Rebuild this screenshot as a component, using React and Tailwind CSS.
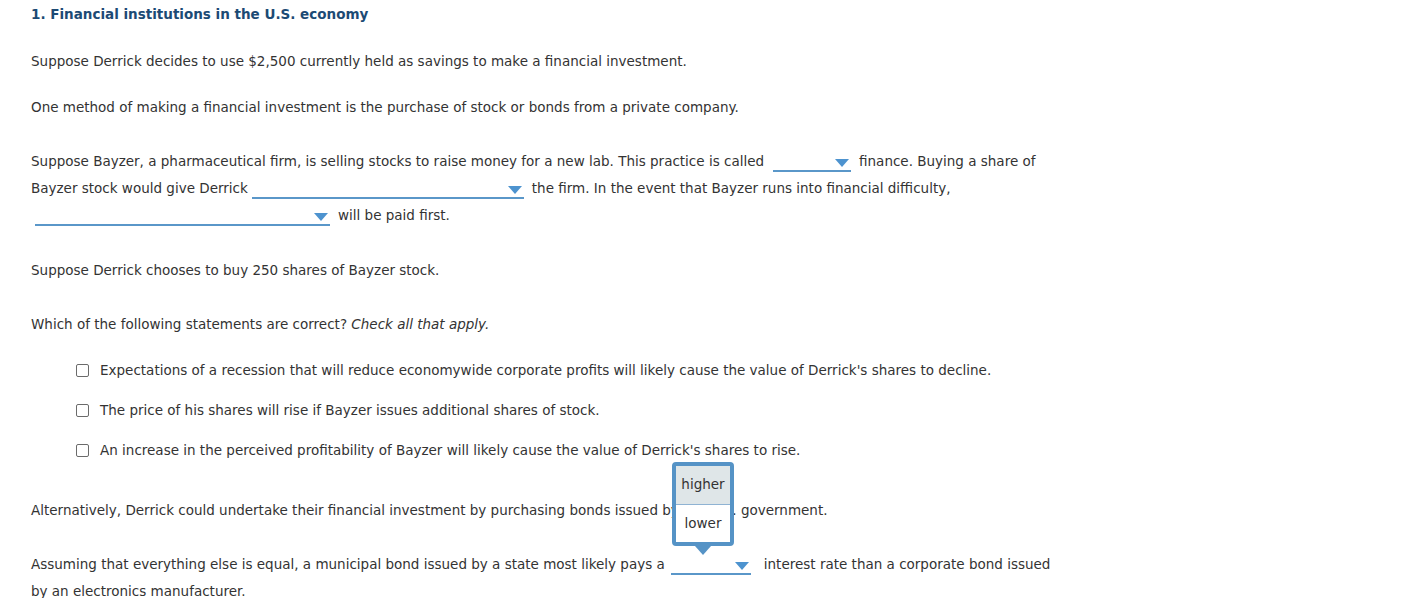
import React from "react";

function Drop({ w, cls = "" }) {
  return (
    <span
      className={`relative inline-block h-[18px] border-b-2 border-[#5a97c9] align-[-6px] ${cls}`}
      style={{ width: w }}
    >
      <span className="absolute right-[2px] top-[5px] h-0 w-0 border-l-[7px] border-r-[7px] border-t-[8px] border-l-transparent border-r-transparent border-t-[#4d93cf]" />
    </span>
  );
}

function Check({ children }) {
  return (
    <div className="flex items-center h-[27px]">
      <span className="ml-[45px] mr-[11px] inline-block h-[13px] w-[13px] rounded-[2px] border border-[#6b6b6b] bg-white" />
      <span>{children}</span>
    </div>
  );
}

export default function App() {
  return (
    <div
      className="w-[1406px] h-[598px] overflow-hidden bg-white text-[13.5px] leading-[27px] text-[#333333] pl-[31px]"
      style={{ fontFamily: '"DejaVu Sans", Verdana, sans-serif' }}
    >
      <div className="pt-[4px] h-[24px] leading-[20px] font-bold text-[#1c4a74]">
        1. Financial institutions in the U.S. economy
      </div>
      <p className="mt-[23.5px]">
        Suppose Derrick decides to use $2,500 currently held as savings to make a financial investment.
      </p>
      <p className="mt-[19px]">
        One method of making a financial investment is the purchase of stock or bonds from a private company.
      </p>
      <p className="mt-[27px] whitespace-nowrap">
        Suppose Bayzer, a pharmaceutical firm, is selling stocks to raise money for a new lab. This practice is called
        <Drop w={78} cls="ml-[9px] mr-[8px]" />
        finance. Buying a share of
        <br />
        Bayzer stock would give Derrick
        <Drop w={272} cls="ml-[4px] mr-[8px]" />
        the firm. In the event that Bayzer runs into financial difficulty,
        <br />
        <Drop w={295} cls="ml-[4px] mr-[8px]" />
        will be paid first.
      </p>
      <p className="mt-[28px]">Suppose Derrick chooses to buy 250 shares of Bayzer stock.</p>
      <p className="mt-[27px]">
        Which of the following statements are correct? <em>Check all that apply.</em>
      </p>
      <div className="mt-[19px] flex flex-col gap-[13px]">
        <Check>
          Expectations of a recession that will reduce economywide corporate profits will likely cause the value of Derrick's shares to decline.
        </Check>
        <Check>The price of his shares will rise if Bayzer issues additional shares of stock.</Check>
        <Check>
          An increase in the perceived profitability of Bayzer will likely cause the value of Derrick's shares to rise.
        </Check>
      </div>
      <div className="relative mt-[33px]">
        <p>
          Alternatively, Derrick could undertake their financial investment by purchasing bonds issued by the U.S. government.
        </p>
        <div className="absolute left-[641px] top-[-35px] z-10 text-[13.5px]">
          <div className="w-[62px] rounded-[4px] border-[4px] border-[#5593c6] bg-white">
            <div className="h-[39px] flex items-center justify-center bg-[#dfe6e8] border-b border-[#8fb3d3] leading-none">
              higher
            </div>
            <div className="h-[37px] pt-[1px] flex items-center justify-center leading-none">lower</div>
          </div>
          <div className="mx-auto h-0 w-0 border-l-[8px] border-r-[8px] border-t-[9px] border-l-transparent border-r-transparent border-t-[#5593c6]" />
        </div>
        <p className="mt-[27px] whitespace-nowrap">
          Assuming that everything else is equal, a municipal bond issued by a state most likely pays a
          <Drop w={80} cls="ml-[6px] mr-[13px]" />
          interest rate than a corporate bond issued
          <br />
          by an electronics manufacturer.
        </p>
      </div>
    </div>
  );
}
